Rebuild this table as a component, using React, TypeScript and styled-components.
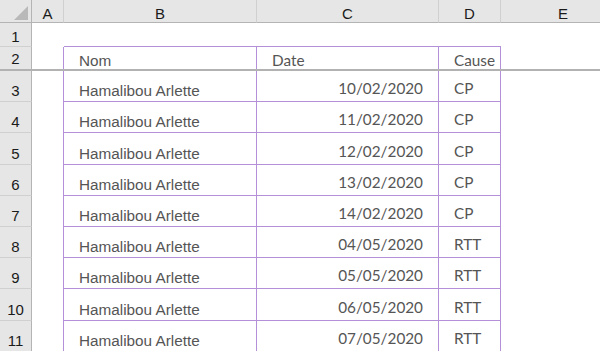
import { Fragment } from "react";
import styled, { createGlobalStyle } from "styled-components";

const ARIAL = `"Liberation Sans", Arial, sans-serif`;
const CALIBRI = `Lato, "Open Sans", sans-serif`;
const PURPLE = "#b490d8";
const HEAD_BG = "#e6e6e6";
const HEAD_EDGE = "#b4b4b4";
const HEAD_SEP = "#d0d0d0";

type Font = "arial" | "calibri";

interface Entry {
    name: string;
    date: string;
    cause: string;
}

const ENTRIES: Entry[] = [
    { name: "Hamalibou Arlette", date: "10/02/2020", cause: "CP" },
    { name: "Hamalibou Arlette", date: "11/02/2020", cause: "CP" },
    { name: "Hamalibou Arlette", date: "12/02/2020", cause: "CP" },
    { name: "Hamalibou Arlette", date: "13/02/2020", cause: "CP" },
    { name: "Hamalibou Arlette", date: "14/02/2020", cause: "CP" },
    { name: "Hamalibou Arlette", date: "04/05/2020", cause: "RTT" },
    { name: "Hamalibou Arlette", date: "05/05/2020", cause: "RTT" },
    { name: "Hamalibou Arlette", date: "06/05/2020", cause: "RTT" },
    { name: "Hamalibou Arlette", date: "07/05/2020", cause: "RTT" },
];

const COLUMNS = ["A", "B", "C", "D", "E"];

const GlobalStyle = createGlobalStyle`
    html, body {
        margin: 0;
        padding: 0;
        background: #ffffff;
        overflow: hidden;
    }
    * {
        box-sizing: border-box;
    }
`;

const Sheet = styled.div`
    display: grid;
    grid-template-columns: 32px 32px 193px 182px 62px 125px;
    grid-template-rows: 23px 24px 22px 2px repeat(9, 31.2px);
    width: 600px;
    height: 351px;
    overflow: hidden;
    background: #ffffff;
`;

const Corner = styled.div`
    display: flex;
    align-items: flex-end;
    justify-content: flex-end;
    padding: 0 2px 2px 0;
    background: ${HEAD_BG};
    border-right: 1px solid ${HEAD_EDGE};
    border-bottom: 1px solid ${HEAD_EDGE};
`;

const ColHeader = styled.div`
    display: flex;
    align-items: flex-end;
    justify-content: center;
    background: ${HEAD_BG};
    border-right: 1px solid ${HEAD_SEP};
    border-bottom: 1px solid ${HEAD_EDGE};
    font-family: ${ARIAL};
    font-size: 15px;
    line-height: 17px;
    color: #1a1a1a;
`;

const RowHeader = styled.div<{ $pad: number; $sep?: boolean }>`
    display: flex;
    align-items: flex-end;
    justify-content: center;
    padding-bottom: ${(p) => p.$pad}px;
    background: ${HEAD_BG};
    border-right: 1px solid ${HEAD_EDGE};
    border-bottom: ${(p) => (p.$sep ? `1px solid ${HEAD_SEP}` : "none")};
    font-family: ${ARIAL};
    font-size: 15px;
    line-height: 17px;
    color: #1a1a1a;
`;

const FreezeLine = styled.div`
    grid-column: 1 / -1;
    background: #b2b2b2;
`;

const Cell = styled.div<{
    $font?: Font;
    $right?: boolean;
    $bottom?: boolean;
    $alignEnd?: boolean;
    $head?: boolean;
}>`
    display: flex;
    align-items: flex-end;
    justify-content: ${(p) => (p.$alignEnd ? "flex-end" : "flex-start")};
    padding: 0 15px ${(p) => (p.$head ? 0 : p.$font === "calibri" ? 4 : 2)}px 15px;
    border-right: ${(p) => (p.$right ? `1px solid ${PURPLE}` : "none")};
    border-bottom: ${(p) => (p.$bottom ? `1px solid ${PURPLE}` : "none")};
    font-family: ${(p) => (p.$font === "calibri" ? CALIBRI : ARIAL)};
    font-size: ${(p) => (p.$font === "calibri" ? 15.3 : 15.3)}px;
    line-height: ${(p) => (p.$font === "calibri" ? 18 : 17)}px;
    color: #555555;
    white-space: nowrap;
`;

const CornerTriangle = () => (
    <svg width="15" height="14" viewBox="0 0 15 14">
        <polygon points="14,0 14,14 0,14" fill="#b9b9b9" />
    </svg>
);

export default function App() {
    return (
        <>
            <GlobalStyle />
            <Sheet>
                <Corner>
                    <CornerTriangle />
                </Corner>
                {COLUMNS.map((letter) => (
                    <ColHeader key={letter}>{letter}</ColHeader>
                ))}

                <RowHeader $pad={1} $sep>
                    1
                </RowHeader>
                <Cell />
                <Cell $bottom />
                <Cell $bottom />
                <Cell $bottom />
                <Cell />

                <RowHeader $pad={2}>2</RowHeader>
                <Cell $right />
                <Cell $right $head>
                    Nom
                </Cell>
                <Cell $right $head $font="calibri">
                    Date
                </Cell>
                <Cell $right $head $font="calibri">
                    Cause
                </Cell>
                <Cell />

                <FreezeLine />

                {ENTRIES.map((entry, index) => (
                    <Fragment key={entry.date}>
                        <RowHeader $pad={2} $sep>
                            {index + 3}
                        </RowHeader>
                        <Cell $right />
                        <Cell $right $bottom>
                            {entry.name}
                        </Cell>
                        <Cell $right $bottom $alignEnd $font="calibri">
                            {entry.date}
                        </Cell>
                        <Cell $right $bottom $font="calibri">
                            {entry.cause}
                        </Cell>
                        <Cell />
                    </Fragment>
                ))}
            </Sheet>
        </>
    );
}
